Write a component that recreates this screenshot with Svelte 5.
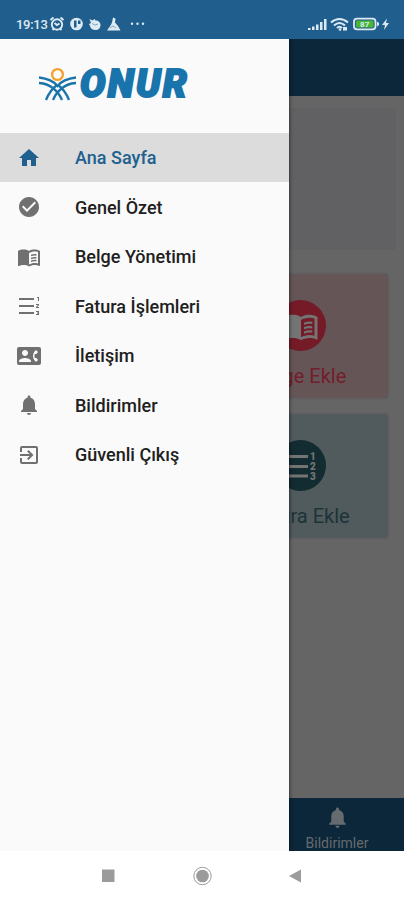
<script lang="ts">
	let active = $state('home');

	const items = [
		{ id: 'home', label: 'Ana Sayfa' },
		{ id: 'check', label: 'Genel Özet' },
		{ id: 'book', label: 'Belge Yönetimi' },
		{ id: 'list', label: 'Fatura İşlemleri' },
		{ id: 'contact', label: 'İletişim' },
		{ id: 'bell', label: 'Bildirimler' },
		{ id: 'exit', label: 'Güvenli Çıkış' }
	];

	const paths: Record<string, string> = {
		home: 'M10 20v-6h4v6h5v-8h3L12 3 2 12h3v8z',
		check: 'M12 2C6.48 2 2 6.48 2 12s4.48 10 10 10 10-4.48 10-10S17.52 2 12 2zm-2 15l-5-5 1.41-1.41L10 14.17l7.59-7.59L19 8l-9 9z',
		book: 'M21 5c-1.11-.35-2.33-.5-3.5-.5-1.95 0-4.05.4-5.5 1.5-1.45-1.1-3.55-1.5-5.5-1.5S2.45 4.9 1 6v14.65c0 .25.25.5.5.5.1 0 .15-.05.25-.05C3.1 20.45 5.05 20 6.5 20c1.95 0 4.05.4 5.5 1.5 1.35-.85 3.8-1.5 5.5-1.5 1.65 0 3.35.3 4.75 1.05.1.05.15.05.25.05.25 0 .5-.25.5-.5V6c-.6-.45-1.25-.75-2-1zm0 13.5c-1.1-.35-2.3-.5-3.5-.5-1.7 0-4.15.65-5.5 1.5V8c1.35-.85 3.8-1.5 5.5-1.5 1.2 0 2.4.15 3.5.5v11.5zM14 9.8c1.6-.7 3.5-.9 5.5-.6v1.5c-2-.3-4-.1-5.5.6zm0 2.9c1.6-.7 3.5-.9 5.5-.6v1.5c-2-.3-4-.1-5.5.6zm0 2.9c1.6-.7 3.5-.9 5.5-.6v1.5c-2-.3-4-.1-5.5.6z',
		list: 'M2 4h15v2H2zM2 11h15v2H2zM2 18h15v2H2zM20 3h2v4h-1V4h-1zM19 10h3v1.2L20.2 13H22v1h-3v-1l1.8-2H19zM19 17h3v4h-3v-1h2v-.5h-1v-1h1V18h-2z',
		contact: 'M22 3H2C.9 3 0 3.9 0 5v14c0 1.1.9 2 2 2h20c1.1 0 1.99-.9 1.99-2L24 5c0-1.1-.9-2-2-2zM8 6c1.66 0 3 1.34 3 3s-1.34 3-3 3-3-1.34-3-3 1.34-3 3-3zm6 12H2v-1c0-2 4-3.1 6-3.1s6 1.1 6 3.1v1zm3.85-4h1.64L21 16l-1.99 1.99A7.51 7.51 0 0 1 16.28 14c-.18-.64-.28-1.31-.28-2s.1-1.36.28-2a7.47 7.47 0 0 1 2.73-3.99L21 8l-1.51 2h-1.64c-.22.63-.35 1.3-.35 2s.13 1.37.35 2z',
		bell: 'M12 22c1.1 0 2-.9 2-2h-4c0 1.1.9 2 2 2zm6-6v-5c0-3.07-1.63-5.64-4.5-6.32V4c0-.83-.67-1.5-1.5-1.5s-1.5.67-1.5 1.5v.68C7.64 5.36 6 7.92 6 11v5l-2 2v1h16v-1l-2-2z',
		exit: 'M10.09 15.59L11.5 17l5-5-5-5-1.41 1.41L12.67 11H3v2h9.67l-2.58 2.59zM19 3H5a2 2 0 0 0-2 2v4h2V5h14v14H5v-4H3v4a2 2 0 0 0 2 2h14c1.1 0 2-.9 2-2V5c0-1.1-.9-2-2-2z'
	};
</script>

{#snippet icon(name: string, size: number)}
	<svg width={size} height={size} viewBox="0 0 24 24" fill="currentColor" fill-rule="evenodd">
		<path d={paths[name]} />
	</svg>
{/snippet}

<div class="phone">
	<header class="status">
		<span class="time">19:13</span>
		<svg class="notifications" width="97" height="18" viewBox="0 0 97 18" fill="currentColor">
			<g fill="none" stroke="currentColor" stroke-width="1.9">
				<circle cx="8" cy="9.500" r="5.200" />
				<path d="M1.500 5L4.500 2.500M14.500 5l-3-2.500M5.500 8l2.500 2 2.500-1.500M3.500 15l1.500-1.500M12.500 15L11 13.500" />
			</g>
			<circle cx="27.500" cy="9" r="6.300" />
			<path class="cutout" d="M25 5.500h2.500v7H25zM29 5.500h2.500v3.500H29z" />
			<path d="M40.500 4l3 1.500 2-1.500 1 1.500c3 0 5 2 5 4.500 0 3-2 5-5 5s-5-1.500-5.500-4l-1-2 2-1z" />
			<path class="crease" d="M43 8.500l3 1.500 3-1" />
			<path d="M64 2.500l2.500 1-.5 4 3 3.500 2.500 4.500H58l3.500-5 1.500-3z" />
			<path class="crease" d="M61 13l3-2 3 2" />
			<circle cx="83" cy="8.700" r="1.200" />
			<circle cx="88.500" cy="8.700" r="1.200" />
			<circle cx="94" cy="8.700" r="1.200" />
		</svg>
		<svg class="signal" width="83" height="18" viewBox="0 0 83 18" fill="currentColor">
			<path d="M1 13h2.500v2H1zM5 11.500h2.500V15H5zM9 9.500h2.500V15H9zM13 7h2.500v8H13zM17 4h2.500v11H17z" />
			<g fill="none" stroke="currentColor" stroke-width="2">
				<path d="M24 7.500q8.500-7 17 0M27 10.500q5.500-5 11 0M30 13q2.500-2.500 5 0" />
			</g>
			<circle cx="33" cy="14.500" r="1.300" />
			<path d="M36 12h4v3.500h-4z" />
			<rect x="47" y="3.700" width="21.500" height="10.600" rx="3" fill="none" stroke="currentColor" stroke-width="1.800" />
			<path d="M70 6.500l2 1.500v2L70 11.500z" />
			<rect class="charge" x="49" y="5.500" width="17.500" height="7" rx="1" />
			<text x="57.700" y="12" text-anchor="middle">87</text>
			<path d="M80 3.500L75 10h3l-1 5 5-7h-3z" />
		</svg>
	</header>

	<div class="stage">
		<main class="page">
			<div class="appbar"></div>
			<div class="content">
				<div class="banner"></div>
				<div class="card red">
					<span class="disc">{@render icon('book', 36)}</span>
					<span>Belge Ekle</span>
				</div>
				<div class="card teal">
					<span class="disc">
						<svg width="34" height="30" viewBox="0 0 34 30" fill="currentColor">
							<path d="M1 4h23v3H1zM1 14h23v3H1zM1 23.500h23v3H1z" />
							<text x="26" y="9">1</text>
							<text x="26" y="19">2</text>
							<text x="26" y="29">3</text>
						</svg>
					</span>
					<span>Fatura Ekle</span>
				</div>
			</div>
			<footer class="tabs">
				<div class="tab">
					{@render icon('bell', 25)}
					<span>Bildirimler</span>
				</div>
			</footer>
		</main>

		<aside class="drawer">
			<div class="brand">
				<svg class="mark" width="39" height="36" viewBox="0 0 39 36">
					<circle class="head" cx="19.500" cy="8.500" r="5.400" />
					<g class="figure">
						<path d="M1 11.500Q14 13 19.500 20Q25 13 38 11.500" />
						<path d="M1 17Q10 17.500 16 23Q21 27 24 34M38 17Q29 17.500 23 23Q18 27 15 34" />
						<path d="M20 19Q27 24 31 34M19 19Q12 24 8 34" />
					</g>
				</svg>
				<span class="wordmark">ONUR</span>
			</div>
			<nav>
				{#each items as item}
					<button class="item" class:active={active === item.id} onclick={() => (active = item.id)}>
						<span class="glyph">{@render icon(item.id, 24)}</span>
						<span>{item.label}</span>
					</button>
				{/each}
			</nav>
		</aside>
	</div>

	<div class="system">
		<svg width="404" height="48" viewBox="0 0 404 48">
			<path d="M102 18.500h12.500V31H102zM289 25l12-6.500v13z" />
			<circle cx="202.500" cy="25" r="6.300" />
			<circle class="ring" cx="202.500" cy="25" r="8.700" />
		</svg>
	</div>
</div>

<style>
	:global(body) {
		margin: 0;
	}

	.phone {
		width: 404px;
		height: 900px;
		display: flex;
		flex-direction: column;
		overflow: hidden;
		background: #fff;
		font-family: Roboto, sans-serif;
	}

	svg {
		display: block;
		flex-shrink: 0;
	}

	.status {
		height: 39px;
		box-sizing: border-box;
		padding: 9px 14px 0 16px;
		display: flex;
		align-items: center;
		background: #205f8d;
		color: #dceaf3;
	}

	.time {
		width: 33px;
		font-size: 13px;
		font-weight: 500;
		letter-spacing: -0.3px;
		white-space: nowrap;
	}

	.signal {
		margin-left: auto;
	}

	.cutout {
		fill: #205f8d;
	}

	.crease {
		fill: none;
		stroke: #7fa6c1;
	}

	.charge {
		fill: #48b735;
	}

	.signal text {
		font-size: 8px;
		font-weight: 700;
	}

	.stage {
		height: 812px;
		position: relative;
		flex-shrink: 0;
		overflow: hidden;
	}

	.page {
		height: 100%;
		display: flex;
		flex-direction: column;
		background: #656565;
	}

	.appbar {
		height: 57px;
		background: #0c2739;
	}

	.content {
		flex: 1;
		padding: 12px 16px 0 0;
		display: flex;
		flex-direction: column;
		align-items: flex-end;
	}

	.banner {
		width: 380px;
		height: 142px;
		margin: 0 -8px 24px 0;
		border-radius: 4px;
		background: #616164;
	}

	.card {
		width: 175px;
		height: 124px;
		margin-bottom: 16px;
		border-radius: 4px;
		display: flex;
		flex-direction: column;
		align-items: center;
		font-size: 20px;
		line-height: 24px;
		box-shadow: 0 0 2px #505050;
	}

	.disc {
		width: 51px;
		height: 51px;
		margin: 26px 0 13px;
		border-radius: 50%;
		display: flex;
		align-items: center;
		justify-content: center;
		color: #747474;
	}

	.red {
		background: #655557;
		color: #741d2b;
	}

	.red .disc {
		background: #741b27;
	}

	.teal {
		background: #515a5c;
		color: #1c3438;
	}

	.teal .disc {
		background: #122c31;
	}

	.disc text {
		font-size: 10px;
		font-weight: 900;
	}

	.tabs {
		height: 53px;
		display: flex;
		justify-content: flex-end;
		background: #0c2739;
	}

	.tab {
		width: 134px;
		padding-top: 7px;
		display: flex;
		flex-direction: column;
		align-items: center;
		gap: 4px;
		font-size: 14px;
		line-height: 18px;
		color: #656b6f;
	}

	.drawer {
		position: absolute;
		top: 0;
		left: 0;
		width: 289px;
		height: 100%;
		background: #fafafa;
		box-shadow: 0 0 4px rgba(0, 0, 0, 0.7);
	}

	.brand {
		height: 94px;
		box-sizing: border-box;
		padding: 0 0 5px 38px;
		display: flex;
		align-items: center;
		gap: 3px;
	}

	.head {
		fill: none;
		stroke: #f3a02c;
		stroke-width: 2.3;
	}

	.figure {
		fill: none;
		stroke: #1974ab;
		stroke-width: 2.3;
	}

	.wordmark {
		font-size: 38px;
		font-weight: 900;
		font-style: italic;
		line-height: 44px;
		letter-spacing: 2.3px;
		color: #1974ab;
		-webkit-text-stroke: 2px #1974ab;
	}

	.item {
		width: 100%;
		height: 49px;
		margin-bottom: 0.5px;
		padding: 0 0 0 17px;
		border: 0;
		display: flex;
		align-items: center;
		background: none;
		font: 500 18px Roboto, sans-serif;
		color: #202020;
		text-align: left;
	}

	.item.active {
		background: #dcdcdc;
		color: #20608f;
	}

	.glyph {
		width: 58px;
		color: #707070;
	}

	.active .glyph {
		color: #20608f;
	}

	.system {
		height: 49px;
		flex-shrink: 0;
		background: #fff;
		fill: #9b9b9b;
	}

	.ring {
		fill: none;
		stroke: #9b9b9b;
		stroke-width: 1;
	}
</style>
